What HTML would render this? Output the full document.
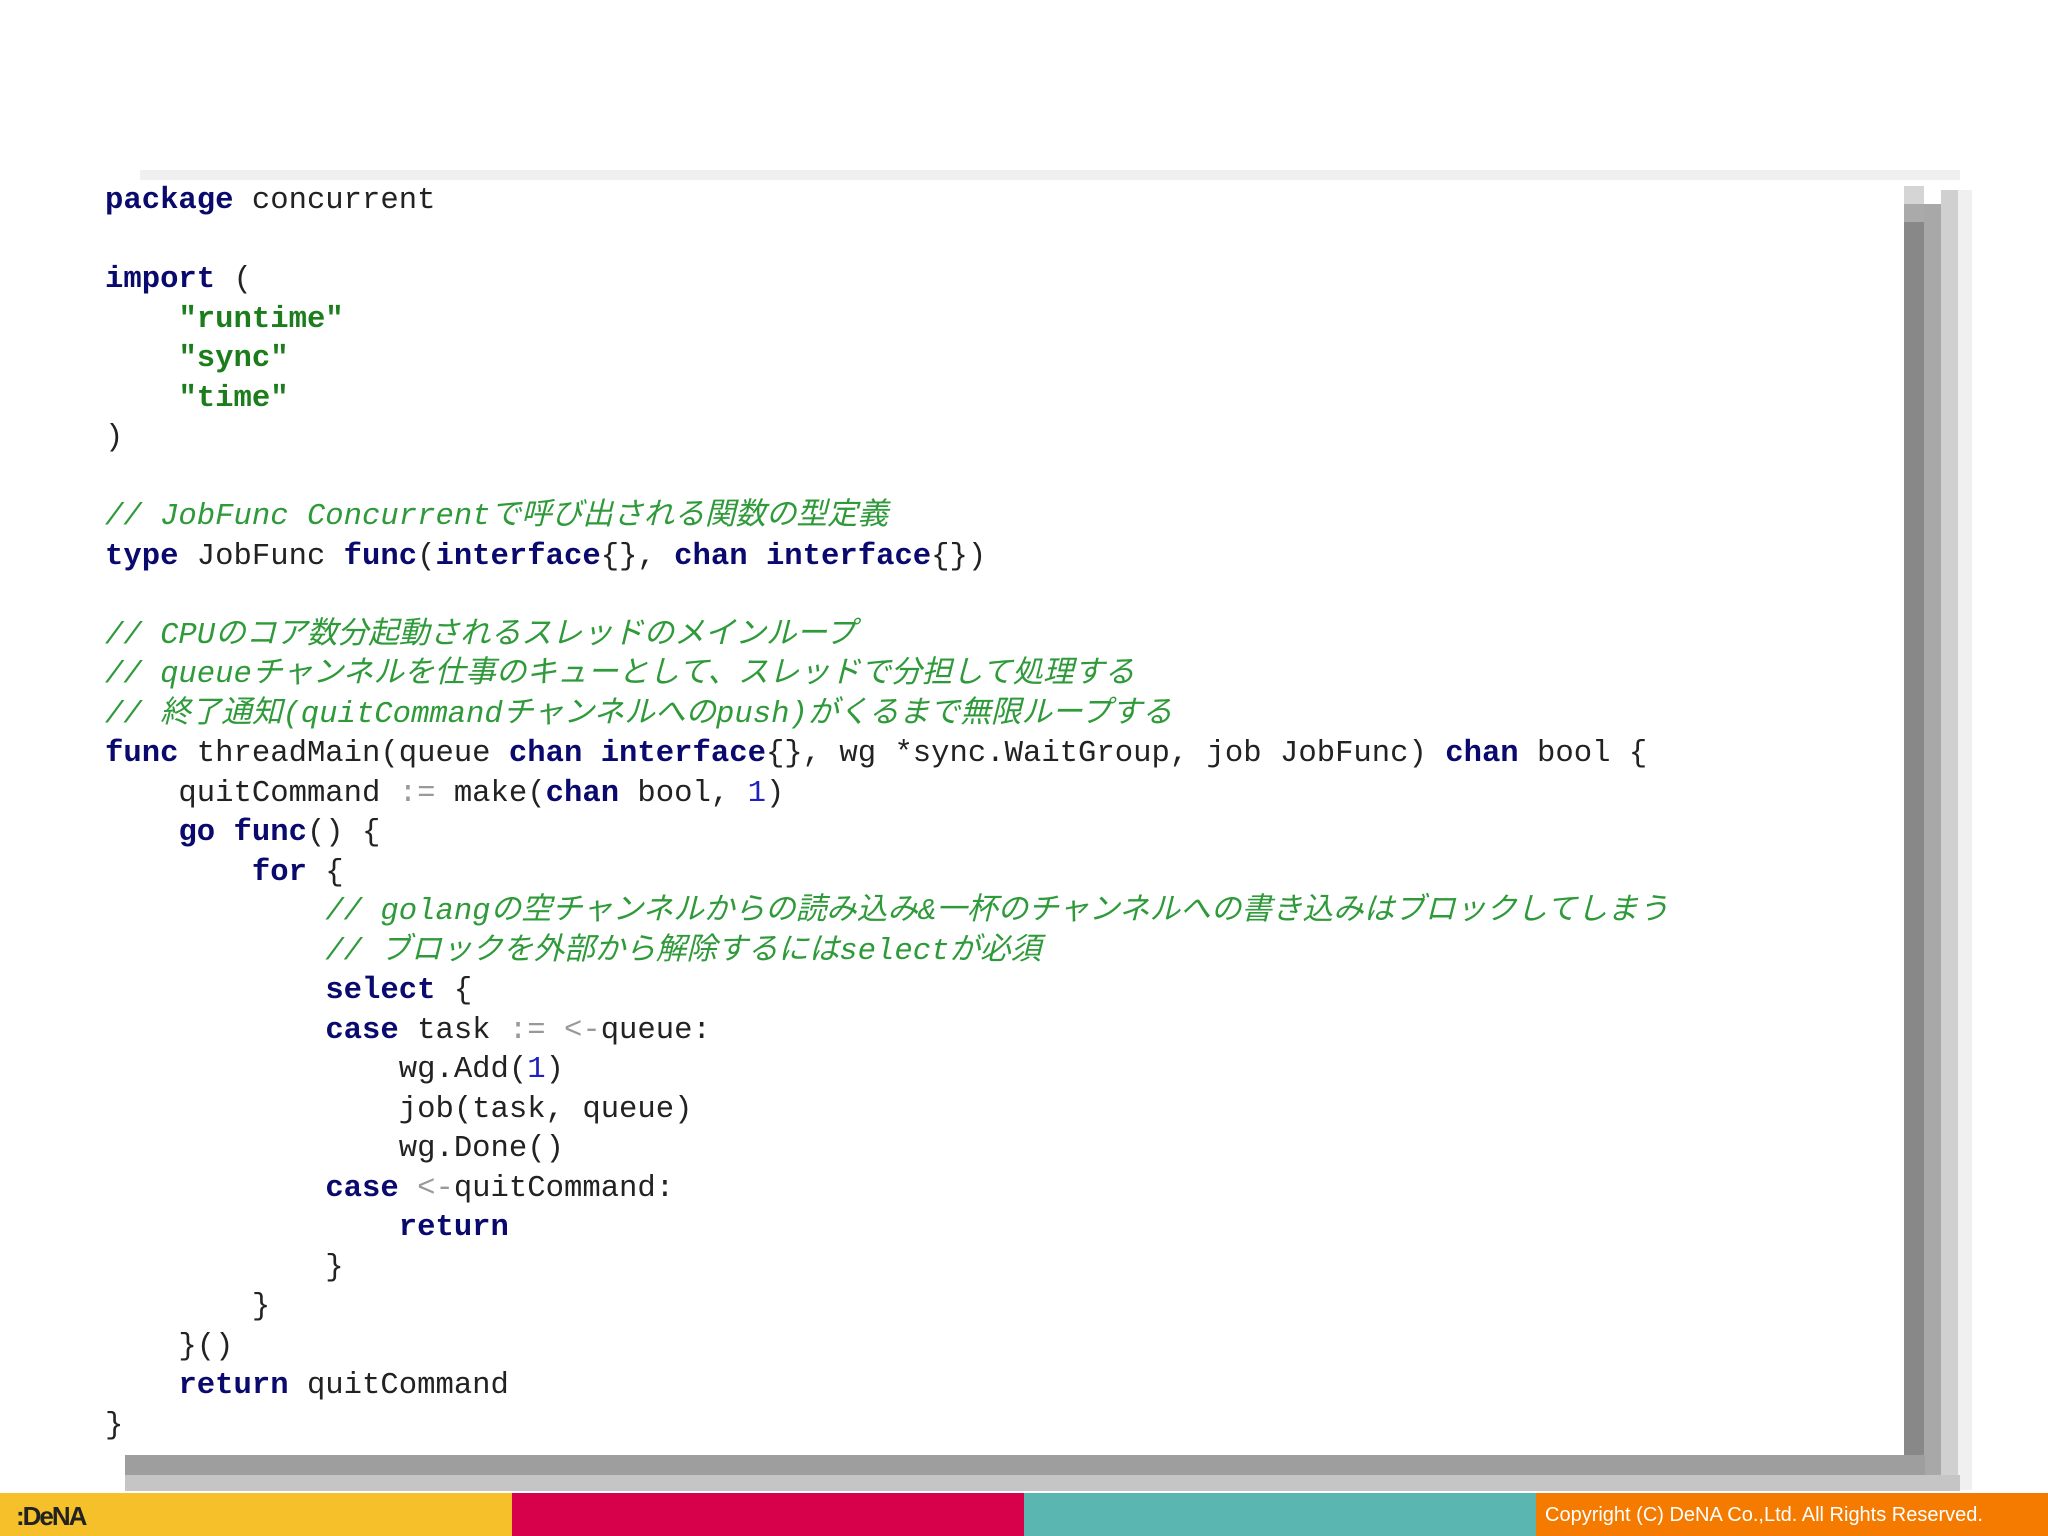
<!DOCTYPE html>
<html><head><meta charset="utf-8"><style>
html,body{margin:0;padding:0;background:#fff;width:2048px;height:1536px;overflow:hidden;position:relative}
.abs{position:absolute}
pre{position:absolute;left:105px;top:182px;margin:0;font-family:"Liberation Mono","Noto Sans CJK JP",monospace;font-size:30.6px;line-height:39.5px;color:#222}
b{color:#0a0a6e;font-weight:bold}
s{text-decoration:none;color:#1c7d1c;font-weight:bold}
i{color:#2f9a3a;font-style:italic}
u{text-decoration:none;color:#2020c0}
o{color:#999}
.bar{position:absolute;top:1493px;height:43px;width:512px}
</style></head><body>
<div class="abs" style="left:140px;top:170px;width:1820px;height:10px;background:#f0f0f0"></div>
<div class="abs" style="left:1904px;top:186px;width:20px;height:18px;background:#d5d5d5"></div>
<div class="abs" style="left:1904px;top:204px;width:20px;height:18px;background:#aaa"></div>
<div class="abs" style="left:1904px;top:222px;width:20px;height:1253px;background:#888"></div>
<div class="abs" style="left:1924px;top:204px;width:17px;height:1271px;background:#a8a8a8"></div>
<div class="abs" style="left:1941px;top:190px;width:17px;height:1300px;background:#d0d0d0"></div>
<div class="abs" style="left:1958px;top:190px;width:14px;height:1300px;background:#f0f0f0"></div>
<div class="abs" style="left:125px;top:1455px;width:1800px;height:20px;background:#9e9e9e"></div>
<div class="abs" style="left:125px;top:1475px;width:1835px;height:16px;background:#c5c5c5"></div>
<div class="abs" style="left:98px;top:180px;width:1806px;height:1275px;background:#fff"></div>
<pre><b>package</b> concurrent

<b>import</b> (
    <s>"runtime"</s>
    <s>"sync"</s>
    <s>"time"</s>
)

<i>// JobFunc Concurrentで呼び出される関数の型定義</i>
<b>type</b> JobFunc <b>func</b>(<b>interface</b>{}, <b>chan</b> <b>interface</b>{})

<i>// CPUのコア数分起動されるスレッドのメインループ</i>
<i>// queueチャンネルを仕事のキューとして、スレッドで分担して処理する</i>
<i>// 終了通知(quitCommandチャンネルへのpush)がくるまで無限ループする</i>
<b>func</b> threadMain(queue <b>chan</b> <b>interface</b>{}, wg *sync.WaitGroup, job JobFunc) <b>chan</b> bool {
    quitCommand <o>:=</o> make(<b>chan</b> bool, <u>1</u>)
    <b>go</b> <b>func</b>() {
        <b>for</b> {
            <i>// golangの空チャンネルからの読み込み&amp;一杯のチャンネルへの書き込みはブロックしてしまう</i>
            <i>// ブロックを外部から解除するにはselectが必須</i>
            <b>select</b> {
            <b>case</b> task <o>:=</o> <o>&lt;-</o>queue:
                wg.Add(<u>1</u>)
                job(task, queue)
                wg.Done()
            <b>case</b> <o>&lt;-</o>quitCommand:
                <b>return</b>
            }
        }
    }()
    <b>return</b> quitCommand
}</pre>
<div class="bar" style="left:0;background:#f5c02a"></div>
<div class="bar" style="left:512px;background:#d6004b"></div>
<div class="bar" style="left:1024px;background:#5ab6b1"></div>
<div class="bar" style="left:1536px;background:#f47a00"></div>
<div class="abs" style="left:16px;top:1501px;font-family:'Liberation Sans',sans-serif;font-weight:bold;font-size:26px;color:#222;letter-spacing:-2px">:DeNA</div>
<div class="abs" style="left:1545px;top:1504px;font-family:'Liberation Sans',sans-serif;font-size:20px;color:#fff">Copyright (C) DeNA Co.,Ltd. All Rights Reserved.</div>
</body></html>
